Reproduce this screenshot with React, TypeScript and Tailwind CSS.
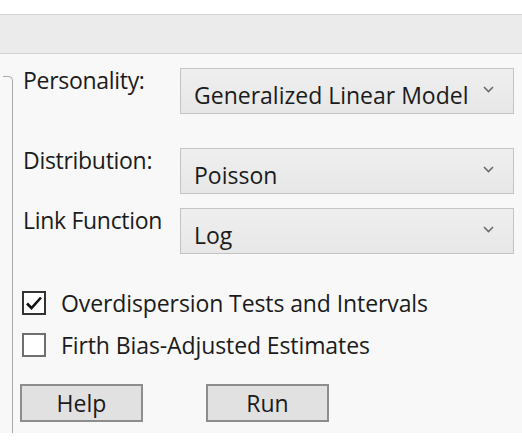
import React from 'react'

const font = "font-['Segoe_UI','Open_Sans','Noto_Sans',sans-serif]"

// Small chevron for the dropdowns
const Chevron = () => (
  <svg width="11" height="7" viewBox="0 0 11 7" className="shrink-0">
    <path d="M1 1 L5.5 5.5 L10 1" fill="none" stroke="#6b6b6b" strokeWidth="1.6" />
  </svg>
)

const Dropdown = ({ value }: { value: string }) => (
  <div className="flex h-[46px] w-[334px] items-center justify-between border border-[#c4c4c4] bg-gradient-to-b from-[#efefef] to-[#e7e7e7] pl-[13px] pr-[19px]">
    <span className="pt-[8px] text-[23px] leading-[28px] text-[#1b1b1b]">{value}</span>
    <span className="-mt-[4px]">
      <Chevron />
    </span>
  </div>
)

const Row = ({ label, value, className }: { label: string; value: string; className?: string }) => (
  <div className={`flex items-start ${className ?? ''}`}>
    <div className="-mt-[2px] w-[157px] text-[23px] leading-[28px] tracking-[-0.3px] text-[#1b1b1b]">{label}</div>
    <Dropdown value={value} />
  </div>
)

const Check = ({ checked, label, className }: { checked?: boolean; label: string; className?: string }) => (
  <div className={`flex items-center ${className ?? ''}`}>
    <div
      className={`flex h-[24px] w-[24px] items-center justify-center border-2 bg-white ${
        checked ? 'border-[#333333]' : 'border-[#6f6f6f]'
      }`}
    >
      {checked && (
        <svg width="18" height="16" viewBox="0 0 18 16">
          <path d="M2 8.5 L6.5 13 L16 2.5" fill="none" stroke="#111" strokeWidth="2.6" />
        </svg>
      )}
    </div>
    <span className="ml-[15px] text-[23px] leading-[28px] tracking-[-0.1px] text-[#1b1b1b]">{label}</span>
  </div>
)

const Btn = ({ label }: { label: string }) => (
  <button className="flex h-[38px] w-[123px] items-center justify-center border-2 border-[#8d8d8d] bg-[#e1e1e1] text-[23px] leading-[28px] text-[#1b1b1b]">
    {label}
  </button>
)

export default function App() {
  return (
    <div className={`flex h-[442px] w-[522px] flex-col bg-white ${font}`}>
      <div className="h-[14px]" />
      <div className="h-[40px] border-y border-[#d3d3d3] bg-[#ebebeb]" />
      <div className="flex h-[379px] bg-[#f8f8f8]">
        {/* group box edge */}
        <div className="ml-[3px] mt-[22px] w-[10px] rounded-tr-[5px] border-r border-t border-[#a9a9a9]" />
        <div className="flex flex-col pl-[10px] pt-[14px]">
          <Row label="Personality:" value="Generalized Linear Model" />
          <Row label="Distribution:" value="Poisson" className="mt-[34px]" />
          <Row label="Link Function" value="Log" className="mt-[14px]" />
          <Check checked label="Overdispersion Tests and Intervals" className="mt-[35px] -ml-[1px]" />
          <Check label="Firth Bias-Adjusted Estimates" className="mt-[14px] -ml-[1px]" />
          <div className="mt-[25px] -ml-[3px] flex gap-[63px]">
            <Btn label="Help" />
            <Btn label="Run" />
          </div>
        </div>
      </div>
    </div>
  )
}
